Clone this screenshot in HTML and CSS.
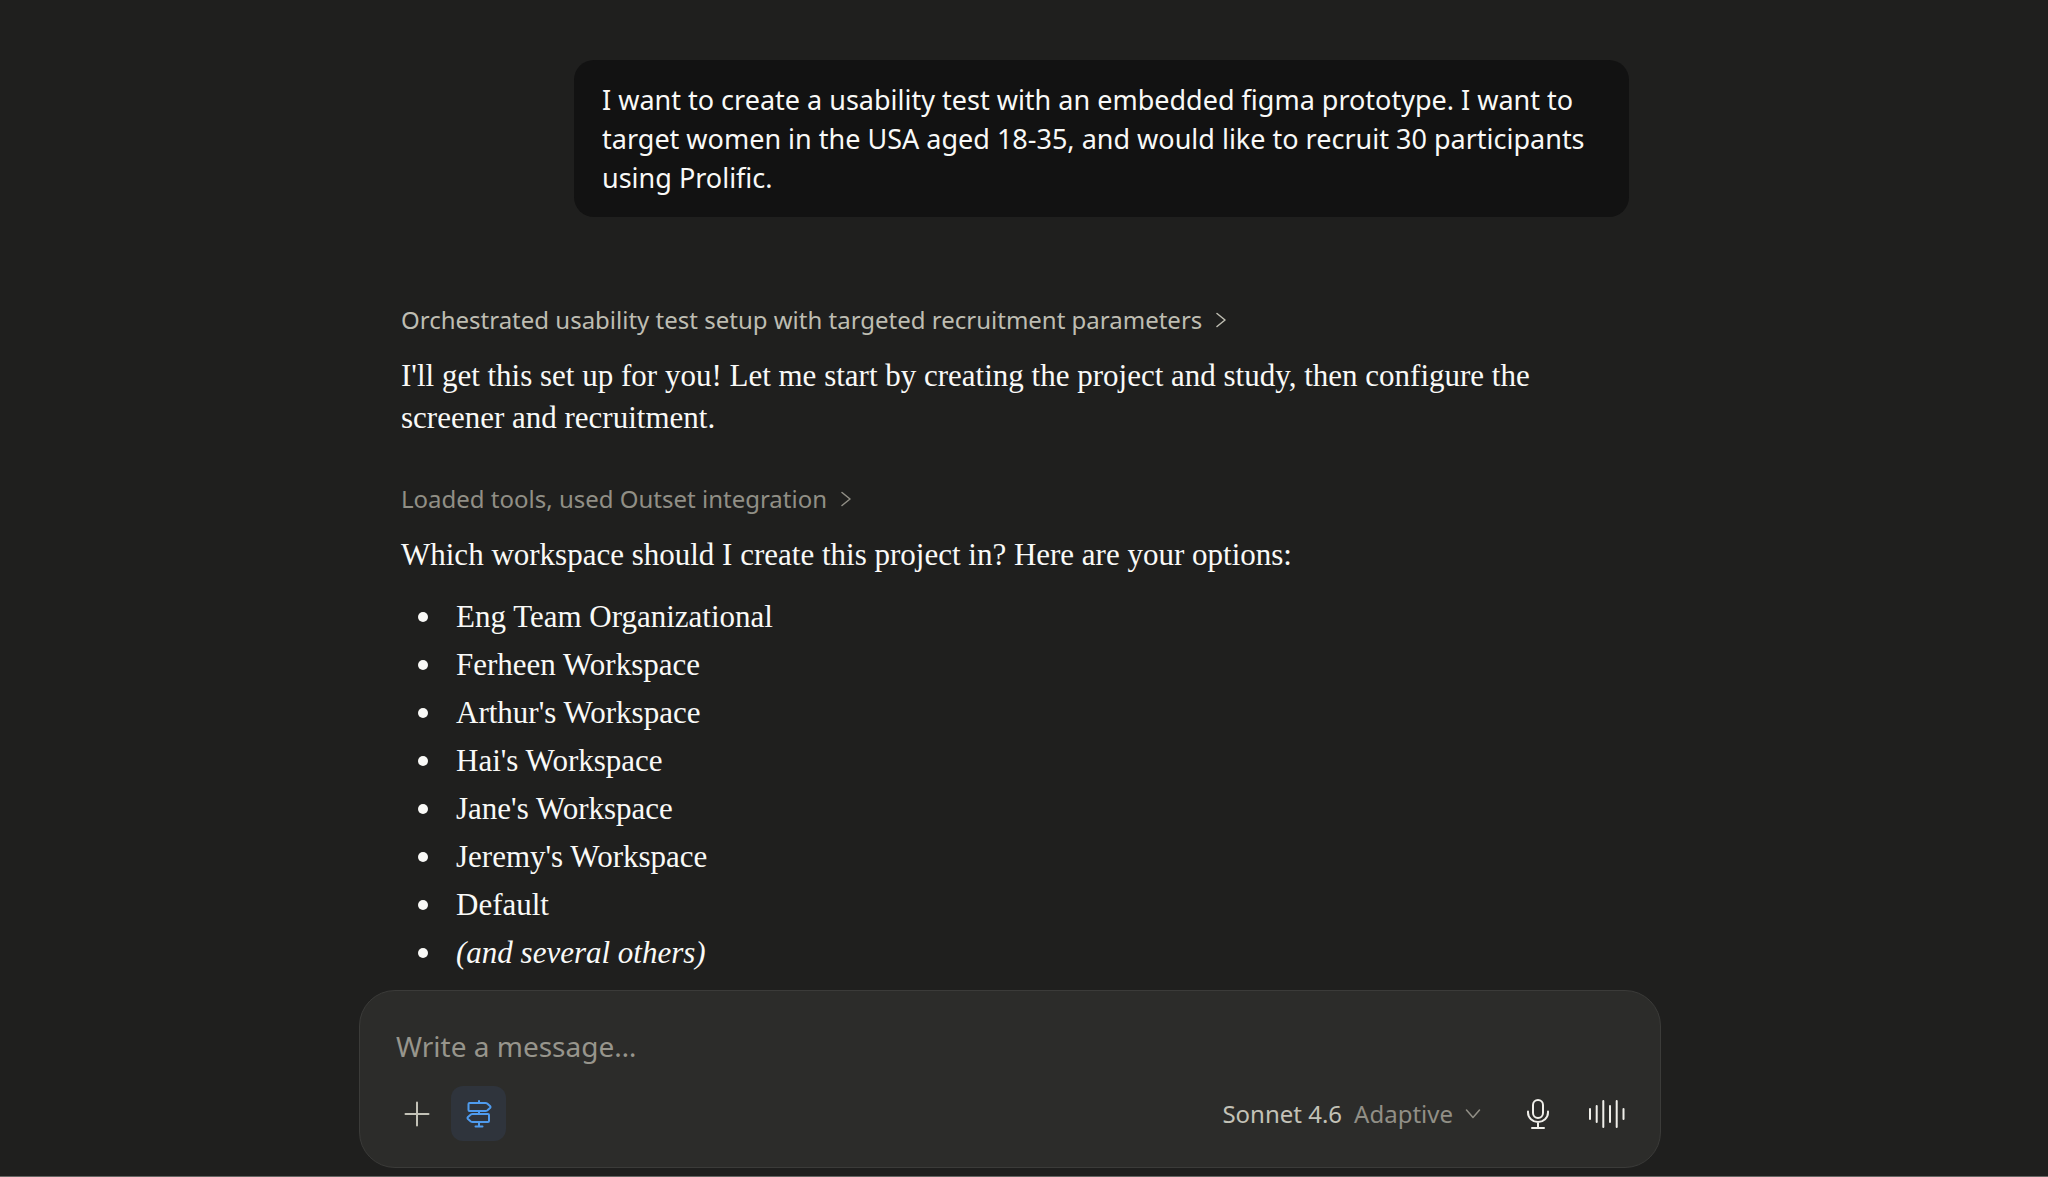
FILE: index.html
```html
<!DOCTYPE html>
<html lang="en">
<head>
    <meta charset="UTF-8">
    <meta name="viewport" content="width=device-width, initial-scale=1.0">
    <title>Usability test setup</title>
    <link rel="stylesheet" href="styles.css">
</head>
<body>

    <main class="chat">
        <section class="thread">
            <div class="user-message">
                <p>I want to create a usability test with an embedded figma prototype. I want to target women in the USA aged 18-35, and would like to recruit 30 participants using Prolific.</p>
            </div>

            <article class="reply">
                <button type="button" class="step">
                    Orchestrated usability test setup with targeted recruitment parameters
                    <svg class="step-arrow" viewBox="0 0 10 16" aria-hidden="true"><path d="M1 1.5 9 8 1 14.5"/></svg>
                </button>
                <p class="reply-text">I'll get this set up for you! Let me start by creating the project and study, then configure the screener and recruitment.</p>

                <button type="button" class="step step-muted">
                    Loaded tools, used Outset integration
                    <svg class="step-arrow" viewBox="0 0 10 16" aria-hidden="true"><path d="M1 1.5 9 8 1 14.5"/></svg>
                </button>
                <p class="reply-text">Which workspace should I create this project in? Here are your options:</p>
                <ul class="workspaces">
                    <li>Eng Team Organizational</li>
                    <li>Ferheen Workspace</li>
                    <li>Arthur's Workspace</li>
                    <li>Hai's Workspace</li>
                    <li>Jane's Workspace</li>
                    <li>Jeremy's Workspace</li>
                    <li>Default</li>
                    <li><em>(and several others)</em></li>
                </ul>
            </article>
        </section>

        <form class="composer">
            <input type="text" class="message-input" aria-label="Message" placeholder="Write a message…">
            <div class="toolbar">
                <button type="button" class="icon-btn" aria-label="Add">
                    <svg width="26" height="26" viewBox="0 0 26 26" aria-hidden="true"><path d="M13 1.500v23M1.500 13h23"/></svg>
                </button>
                <button type="button" class="icon-btn active" aria-label="Outset">
                    <svg width="26" height="28" viewBox="0 0 26 28" aria-hidden="true">
                        <path d="M13 1v2M13 11v3M13 22v4.500M9.500 26.500h7"/>
                        <path d="M3.500 3h16q1 0 1.700.500l2.800 2.500q1 1 0 2l-2.800 2.500q-.7.500-1.700.500h-16q-1 0-1-1V4q0-1 1-1z"/>
                        <path d="M22 14H6.500q-1 0-1.700.500L2 17q-1 1 0 2l2.800 2.500q.7.500 1.700.500H22q1 0 1-1v-6q0-1-1-1z"/>
                    </svg>
                </button>
                <button type="button" class="model-btn">
                    <span>Sonnet 4.6</span>
                    <span class="model-mode">Adaptive</span>
                    <svg class="model-arrow" width="16" height="10" viewBox="0 0 16 10" aria-hidden="true"><path d="M1.500 1 8 8.500 14.500 1"/></svg>
                </button>
                <button type="button" class="icon-btn voice" aria-label="Dictate">
                    <svg width="22" height="30" viewBox="0 0 22 30" aria-hidden="true">
                        <rect x="6" y="1" width="10" height="18" rx="5"/>
                        <path d="M1 12.500v1a10 9.500 0 0 0 20 0v-1M11 23v6M5 29h12"/>
                    </svg>
                </button>
                <button type="button" class="icon-btn voice" aria-label="Voice mode">
                    <svg width="36" height="28" viewBox="0 0 36 28" aria-hidden="true"><path d="M1 9v10M7.700 6v16M14.300 1v26M21 6v16M27.700 1v26M34.500 9v10"/></svg>
                </button>
            </div>
        </form>
    </main>

</body>
</html>
```
FILE: styles.css
```css
* {
    box-sizing: border-box;
}
body {
    margin: 0;
    background: #1f1f1e;
    color: #f9f9f7;
    font-family: "Noto Sans", sans-serif;
}
p {
    margin: 0;
}
button {
    border: 0;
    padding: 0;
    background: none;
    color: inherit;
    font-family: inherit;
    cursor: pointer;
}
svg {
    fill: none;
    stroke: currentColor;
    stroke-width: 2;
    stroke-linecap: round;
    stroke-linejoin: round;
}
.chat {
    display: flex;
    flex-direction: column;
    min-height: 100vh;
    padding: 60px 28px 8px 0;
    border-bottom: 1px solid #666664;
}
.thread {
    flex: 1;
    width: 100%;
    max-width: 1238px;
    margin: 0 auto;
    display: flex;
    flex-direction: column;
    gap: 85px;
}
.user-message {
    align-self: flex-end;
    max-width: 1055px;
    padding: 20px 28px;
    border-radius: 20px;
    background: #121212;
    font-size: 27px;
    line-height: 39px;
}
.reply {
    padding: 0 10px;
}
.step {
    display: flex;
    align-items: center;
    gap: 14px;
    margin-bottom: 17px;
    color: #bebdb2;
    font-size: 24px;
    line-height: 36px;
}
.step-muted {
    margin-top: 42px;
    color: #918f86;
}
.step-arrow {
    width: 10px;
    height: 16px;
}
.step-arrow,
.model-arrow {
    stroke-width: 1.5;
}
.reply-text,
.workspaces {
    font-family: "Liberation Serif", serif;
    font-size: 31px;
    line-height: 42px;
}
.workspaces {
    display: flex;
    flex-direction: column;
    gap: 6px;
    margin: 20px 0 13px;
    padding-left: 17px;
    list-style: none;
}
.workspaces li {
    display: flex;
    align-items: center;
    gap: 28px;
}
.workspaces li::before {
    content: "";
    width: 10px;
    height: 10px;
    border-radius: 50%;
    background: currentColor;
}
.composer {
    width: 100%;
    max-width: 1302px;
    margin: 0 auto;
    padding: 31px 26px 26px 29px;
    border: 1px solid #3b3b39;
    border-radius: 36px;
    background: #2c2c2a;
}
.message-input {
    display: block;
    width: 100%;
    height: 48px;
    margin-bottom: 16px;
    padding: 0 7px;
    border: 0;
    outline: 0;
    background: none;
    color: inherit;
    font-family: inherit;
    font-size: 28px;
}
.message-input::placeholder {
    color: #97958c;
    opacity: 1;
}
.toolbar {
    display: flex;
    align-items: center;
    gap: 7px;
}
.icon-btn {
    display: flex;
    align-items: center;
    justify-content: center;
    width: 55px;
    height: 55px;
    border-radius: 12px;
    color: #c3c2b7;
}
.active {
    background: #2f343c;
    color: #4f9bee;
}
.model-btn {
    display: flex;
    align-items: center;
    gap: 12px;
    margin-left: auto;
    margin-right: 22px;
    color: #c3c2b7;
    font-size: 24px;
    line-height: 36px;
}
.model-mode,
.model-arrow {
    color: #918f86;
}
.voice {
    color: #f0efea;
}
.voice + .voice {
    margin-left: 7px;
}
```
